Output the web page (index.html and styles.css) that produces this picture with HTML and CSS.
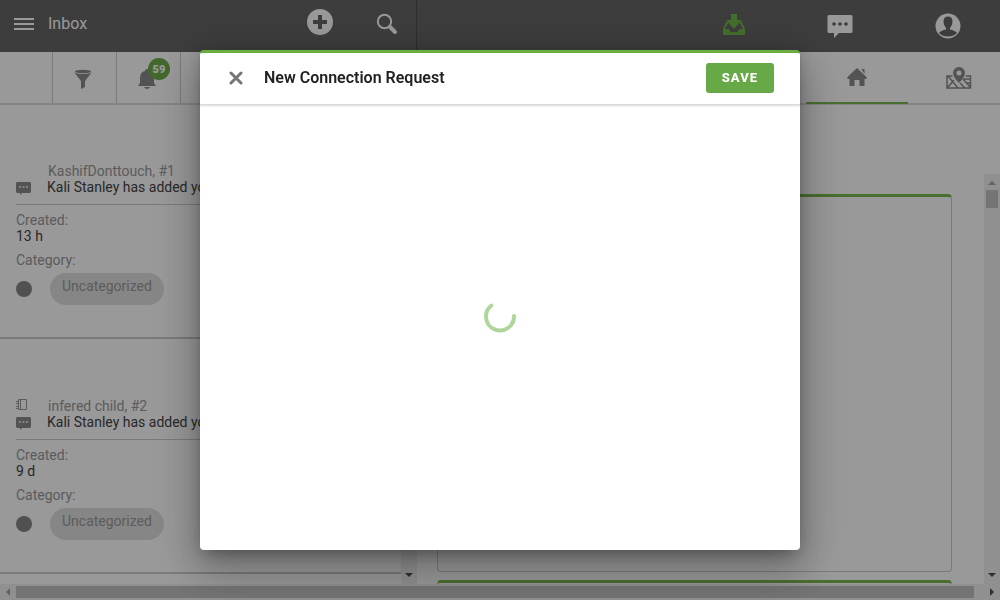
FILE: index.html
```html
<!DOCTYPE html>
<html lang="en">
<head>
<meta charset="utf-8">
<meta name="viewport" content="width=device-width, initial-scale=1">
<title>Inbox</title>
<link rel="stylesheet" href="styles.css">
</head>
<body>
<div class="app">
  <header class="topbar">
    <div class="topbar-left">
      <button class="icon-btn menu" aria-label="Menu"><svg width="20" height="12" viewBox="0 0 20 12"><path d="M0 1h20M0 6h20M0 11h20" stroke="currentColor" stroke-width="2"/></svg></button>
      <h1 class="title">Inbox</h1>
      <button class="icon-btn add" aria-label="Add"><svg width="28" height="28" viewBox="0 0 28 28"><circle cx="14" cy="14" r="13" fill="currentColor"/><path d="M14 7v14M7 14h14" stroke="#666" stroke-width="4"/></svg></button>
      <button class="icon-btn search" aria-label="Search"><svg width="22" height="22" viewBox="0 0 22 22" fill="none" stroke="currentColor"><circle cx="8.500" cy="8.500" r="6.700" stroke-width="2"/><path d="M14 14l5 5" stroke-width="4" stroke-linecap="round"/></svg></button>
    </div>
    <nav class="topbar-right">
      <button class="icon-btn active" aria-label="Inbox"><svg width="22" height="22" viewBox="0 0 22 22" fill="currentColor"><path d="M8 0h6v6h5l-8 9-8-9h5z"/><path d="M3 8 0 15v6h22v-6l-3-7h-1.500l-1 2h1L20 15h-3.500l-2.500 3H8l-2.500-3H2l2.500-5h1l-1-2z"/></svg></button>
      <button class="icon-btn" aria-label="Messages"><svg width="26" height="24" viewBox="0 0 26 24"><path d="M2 1h22q1.500 0 1.500 1.500v15q0 1.500-1.500 1.500H12l-5 5v-5H2Q.5 19 .5 17.500v-15Q.5 1 2 1z" fill="currentColor"/><g fill="#666"><circle cx="7" cy="10" r="1.800"/><circle cx="13" cy="10" r="1.800"/><circle cx="19" cy="10" r="1.800"/></g></svg></button>
      <button class="icon-btn" aria-label="Account"><svg width="26" height="26" viewBox="0 0 26 26"><circle cx="13" cy="13" r="12.500" fill="currentColor"/><path d="M13 3.500q4.500 0 4.500 5 0 4-2.500 6.500v1.500q5 1 7 3.500-3.500 3.500-9 3.500T4 20q2-2.500 7-3.500V15q-2.500-2.500-2.500-6.500 0-5 4.500-5z" fill="#666"/></svg></button>
    </nav>
  </header>

  <div class="tabs">
    <div class="tabs-left">
      <span class="tab-spacer"></span>
      <button class="tool" aria-label="Filter"><svg width="18" height="20" viewBox="0 0 18 20" fill="currentColor"><path d="M0 3 7 12v8l4-2v-6l7-9q-2 2-9 2T0 3z"/><ellipse cx="9" cy="2.500" rx="8" ry="1.800"/></svg></button>
      <button class="tool bell" aria-label="Notifications, 59"><svg width="18" height="20" viewBox="0 0 18 20" fill="currentColor"><path d="M9 0q2 0 2 2 5 1 5 7v5l2 3H0l2-3V9q0-6 5-7 0-2 2-2z"/><path d="M6 18h6q-1 2-3 2t-3-2z"/></svg><span class="badge">59</span></button>
      <span class="tool"></span>
    </div>
    <div class="tabs-right">
      <button class="tab selected" aria-label="Home"><svg width="20" height="18" viewBox="0 0 20 18" fill="currentColor"><path d="M10 0 20 9.500 19 11h-1.500v7h-5v-6h-5v6h-5v-7H1L0 9.500z"/><path d="M14.500 1h3v5z"/></svg></button>
      <button class="tab" aria-label="Map"><svg width="26" height="22" viewBox="0 0 26 22" fill="none" stroke="currentColor"><path d="M6.500 9H1v12h23.500V9h-5M2 9l10 12M2 20l6-7M14 16l5 5M17 12l7 8M18 12h6M20 16h4" stroke-width="1.500"/><path d="M13 0a6 6 0 0 1 6 6q0 4-6 10Q7 10 7 6a6 6 0 0 1 6-6z" fill="currentColor" stroke="none"/><circle cx="13" cy="6" r="2.500" fill="#fff" stroke="none"/></svg></button>
    </div>
  </div>

  <main class="content">
    <section class="list-pane">
      <div class="list">
        <article class="item">
          <div class="row"><span class="icon"></span><span class="name">KashifDonttouch, #1</span></div>
          <div class="row"><span class="icon message"><svg width="15" height="13" viewBox="0 0 15 13"><path d="M1 0h13l1 1v9l-1 1H6l-2 2v-2H1l-1-1V1z" fill="currentColor"/><path d="M3 4h2v2H3zM6.500 4h2v2h-2zM10 4h2v2h-2z" fill="#ddd"/></svg></span><span class="event">Kali Stanley has added you to the conversation</span></div>
          <dl class="facts"><dt>Created:</dt><dd>13 h</dd><dt>Category:</dt><dd class="category"><span class="dot"></span><span class="chip">Uncategorized</span></dd></dl>
        </article>
        <article class="item">
          <div class="row"><span class="icon book"><svg width="12" height="12" viewBox="0 0 12 12" fill="none" stroke="currentColor"><path d="M2.500 1.500h8v10h-8zM4.500 1.500v10M0 3.500h3M0 5.500h3M0 8.500h3M0 10.500h3"/></svg></span><span class="name">infered child, #2</span></div>
          <div class="row"><span class="icon message"><svg width="15" height="13" viewBox="0 0 15 13"><path d="M1 0h13l1 1v9l-1 1H6l-2 2v-2H1l-1-1V1z" fill="currentColor"/><path d="M3 4h2v2H3zM6.500 4h2v2h-2zM10 4h2v2h-2z" fill="#ddd"/></svg></span><span class="event">Kali Stanley has added you to the conversation</span></div>
          <dl class="facts"><dt>Created:</dt><dd>9 d</dd><dt>Category:</dt><dd class="category"><span class="dot"></span><span class="chip">Uncategorized</span></dd></dl>
        </article>
      </div>
      <div class="scroll-y"><i class="arrow up"></i><i class="arrow down"></i></div>
    </section>
    <section class="detail-pane">
      <div class="cards"><div class="card"></div><div class="card"></div></div>
      <div class="scroll-y"><i class="arrow up muted"></i><i class="thumb"></i><i class="arrow down"></i></div>
    </section>
  </main>
  <div class="scroll-x"><i class="arrow left muted"></i><i class="thumb"></i><i class="arrow right"></i></div>
</div>

<div class="backdrop">
  <div class="modal" role="dialog" aria-modal="true" aria-labelledby="modal-title">
    <header class="modal-head">
      <button class="close" aria-label="Close"><svg width="14" height="14" viewBox="0 0 14 14"><path d="M2 2l10 10M12 2 2 12" stroke="currentColor" stroke-width="3" stroke-linecap="round"/></svg></button>
      <h2 class="modal-title" id="modal-title">New Connection Request</h2>
      <button class="save">SAVE</button>
    </header>
    <div class="modal-body" role="status" aria-label="Loading">
      <svg width="32" height="32" viewBox="0 0 32 32"><path d="M7.300 4.500A14 14 0 1 0 30 15" fill="none" stroke="#b0d69e" stroke-width="4" stroke-linecap="round"/></svg>
    </div>
  </div>
</div>
</body>
</html>
```
FILE: styles.css
```css
* { box-sizing: border-box; }
body { margin: 0; font: 14px/16px Roboto, "Liberation Sans", sans-serif; color: #444; background: #fff; }
button { margin: 0; padding: 0; border: 0; background: none; color: inherit; font: inherit; cursor: pointer; }
h1, h2, dl, dd { margin: 0; }
svg { display: block; }

.app { display: flex; flex-direction: column; height: 100vh; overflow: hidden; }

.topbar { display: flex; flex: 0 0 52px; background: #666; color: #fff; }
.topbar-left { display: flex; align-items: center; flex: 0 0 417px; padding: 0 18px 4px 14px; border-right: 1px solid #4c4c4c; }
.title { flex: 1; margin-left: 14px; font-size: 16px; font-weight: 400; }
.add { margin: 0 42px 4px 0; }
.topbar-right { display: flex; flex: 1; justify-content: flex-end; align-items: center; gap: 82px; padding-right: 39px; }
.active { margin-bottom: 2px; color: #73b948; }

.tabs { display: flex; flex: 0 0 53px; border-bottom: 2px solid #ddd; color: #8a8a8a; }
.tabs-left { display: flex; flex: 0 0 417px; }
.tab-spacer { width: 52px; }
.tool { display: flex; align-items: center; justify-content: center; width: 64px; padding-right: 4px; border-left: 1px solid #ccc; }
.tool svg { margin-top: 2px; }
.bell { position: relative; }
.badge { position: absolute; left: 31px; top: 6px; width: 22px; height: 22px; border-radius: 50%; background: #6eae4a; color: #fff; font-size: 11px; font-weight: 900; line-height: 23px; }
.tabs-right { display: flex; flex: 1; justify-content: flex-end; }
.tab { display: flex; align-items: center; justify-content: center; width: 102px; margin-bottom: -1px; border-bottom: 2px solid transparent; }
.tab:last-child { width: 92px; padding: 2px 0 0 10px; }
.selected { border-bottom-color: #7bb84f; }

.content { display: flex; flex: 1; min-height: 0; }
.list-pane { display: flex; flex: 0 0 417px; min-width: 0; }
.list { flex: 1; min-width: 0; overflow: hidden; }
.item { height: 235px; padding: 58px 0 0 16px; border-bottom: 2px solid #ccc; }
.item:first-child { height: 234px; }
.item + .item { padding-top: 59px; }
.row { display: flex; align-items: center; height: 16px; white-space: nowrap; }
.icon { flex: 0 0 32px; color: #8a8a8a; }
.message { padding-top: 2px; }
.book { padding-bottom: 4px; color: #999; }
.name { color: #999; }
.event { margin-left: -1px; color: #444; }
.facts { margin-top: 9px; padding-top: 7px; border-top: 1px solid #ccc; }
.facts dt { color: #999; }
.facts dd { margin-bottom: 8px; }
.facts .category { display: flex; align-items: center; gap: 18px; margin: 5px 0 0; }
.dot { width: 16px; height: 16px; border-radius: 50%; background: #888; }
.chip { height: 32px; padding: 5px 12px; border-radius: 16px; background: #e0e0e0; color: #999; }

.detail-pane { display: flex; flex: 1; min-width: 0; padding-top: 69px; }
.cards { display: flex; flex: 1; flex-direction: column; gap: 8px; padding: 20px 32px 0 20px; overflow: hidden; }
.card { flex: 0 0 378px; border: 1px solid #ccc; border-top: 3px solid #7bb84f; border-radius: 4px; }

.scroll-y { display: flex; flex: 0 0 16px; flex-direction: column; align-items: center; padding: 7px 2px; background: #f1f1f1; }
.scroll-y .down { margin-top: auto; }
.scroll-y .thumb { width: 12px; height: 18px; margin-top: 5px; background: #c1c1c1; }
.scroll-x { display: flex; flex: 0 0 16px; align-items: center; padding: 2px 6px; background: #f1f1f1; }
.scroll-x .thumb { flex: 1; height: 12px; margin: 0 16px 0 6px; background: #c1c1c1; }
.arrow { border: 4px solid transparent; color: #505050; }
.muted { color: #a3a3a3; }
.up { border-top-width: 0; border-bottom-color: currentColor; }
.down { border-bottom-width: 0; border-top-color: currentColor; }
.left { border-left-width: 0; border-right-color: currentColor; }
.right { border-right-width: 0; border-left-color: currentColor; }

.backdrop { position: fixed; inset: 0; display: grid; place-items: center; background: rgba(0, 0, 0, .4); }
.modal { display: flex; flex-direction: column; width: min(600px, 100%); height: min(500px, 100%); border-top: 3px solid #6cae40; border-radius: 4px; background: #fff; box-shadow: 0 11px 15px -7px rgba(0, 0, 0, .2), 0 24px 38px 3px rgba(0, 0, 0, .14), 0 9px 46px 8px rgba(0, 0, 0, .18), 0 2px 16px rgba(0, 0, 0, .16); }
.modal-head { display: flex; align-items: center; flex: 0 0 52px; padding: 0 26px 2px 29px; border-bottom: 1px solid #d8d8d8; box-shadow: 0 1px 2px rgba(0, 0, 0, .15); color: #222; }
.close { color: #757575; }
.modal-title { flex: 1; margin-left: 21px; font-size: 16px; font-weight: 600; }
.save { height: 30px; padding: 0 16px; border-radius: 3px; background: #67a947; color: #fff; font-size: 12px; font-size: 13px; font-weight: 800; letter-spacing: 1px; }
.modal-body { display: flex; flex: 1; align-items: center; justify-content: center; padding-bottom: 22px; }
```
